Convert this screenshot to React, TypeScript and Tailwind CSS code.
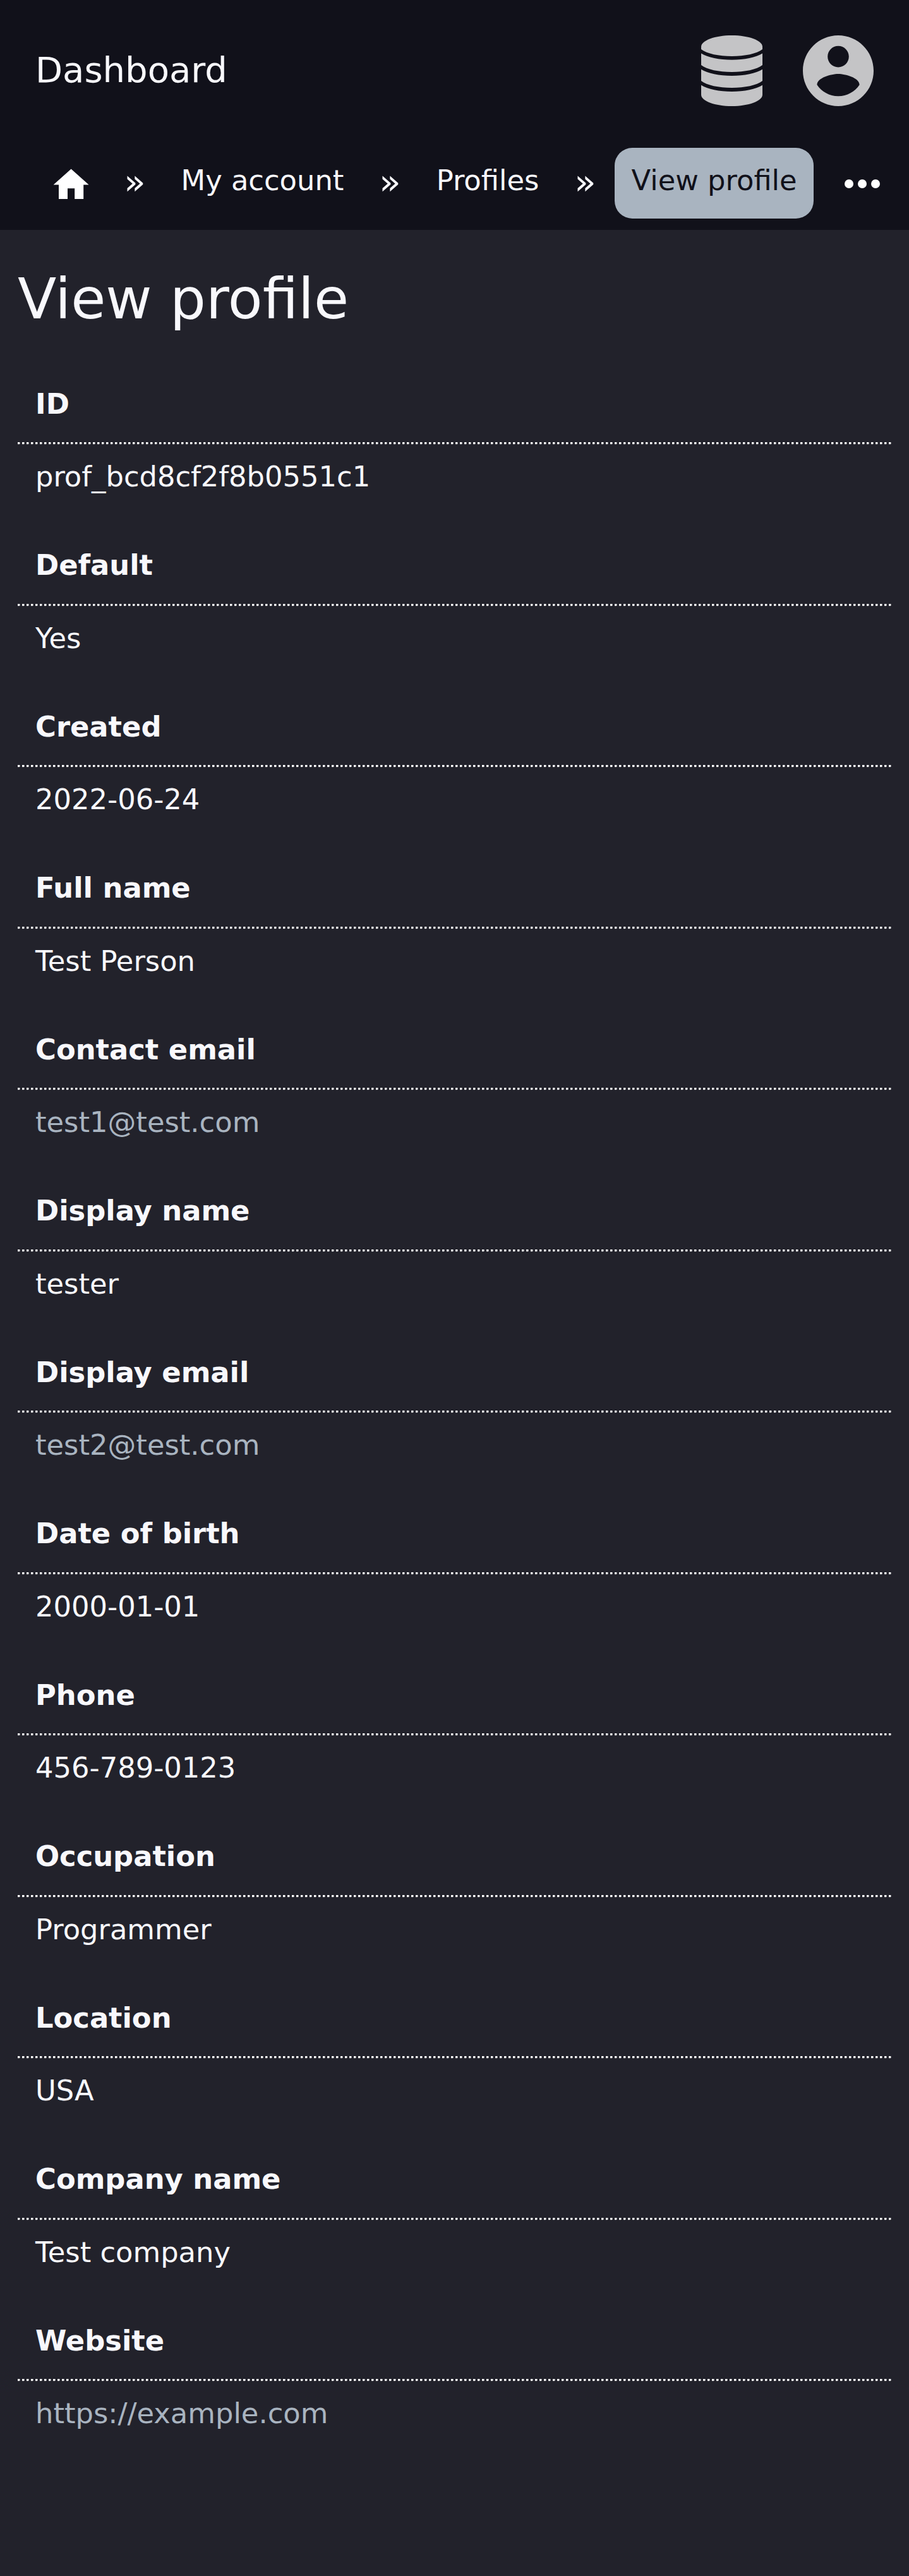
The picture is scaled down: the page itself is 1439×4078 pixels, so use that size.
const fields: { label: string; value: string; link?: boolean }[] = [
  { label: "ID", value: "prof_bcd8cf2f8b0551c1" },
  { label: "Default", value: "Yes" },
  { label: "Created", value: "2022-06-24" },
  { label: "Full name", value: "Test Person" },
  { label: "Contact email", value: "test1@test.com", link: true },
  { label: "Display name", value: "tester" },
  { label: "Display email", value: "test2@test.com", link: true },
  { label: "Date of birth", value: "2000-01-01" },
  { label: "Phone", value: "456-789-0123" },
  { label: "Occupation", value: "Programmer" },
  { label: "Location", value: "USA" },
  { label: "Company name", value: "Test company" },
  { label: "Website", value: "https://example.com", link: true },
];

function DatabaseIcon() {
  return (
    <svg viewBox="0 0 97 112" className="h-28 w-[97px]" fill="currentColor">
      <path d="M0 18C0 8 22 0 48.500 0S97 8 97 18V22C88 29 69 33 48.500 33S9 29 0 22Z" />
      <path d="M0 28.500C10 35 29 38.800 48.500 38.800S87 35 97 28.500V47C88 54 69 58 48.500 58S9 54 0 47Z" />
      <path d="M0 53.700C10 60.200 29 64 48.500 64S87 60.200 97 53.700V72C88 79 69 83 48.500 83S9 79 0 72Z" />
      <path d="M0 78.800C10 85.300 29 89 48.500 89S87 85.300 97 78.800V94C97 104 75 112 48.500 112S0 104 0 94Z" />
    </svg>
  );
}

function AccountIcon() {
  return (
    <svg viewBox="2 2 20 20" className="size-28" fill="currentColor">
      <path d="M12 2C6.480 2 2 6.480 2 12s4.480 10 10 10 10-4.480 10-10S17.520 2 12 2zm0 3c1.660 0 3 1.340 3 3s-1.340 3-3 3-3-1.340-3-3 1.340-3 3-3zm0 14.200c-2.500 0-4.710-1.280-6-3.220.030-1.990 4-3.080 6-3.080 1.990 0 5.970 1.090 6 3.080-1.290 1.940-3.500 3.220-6 3.220z" />
    </svg>
  );
}

function Separator() {
  return <span className="w-[34.300px] pt-5 text-[56px]">»</span>;
}

export default function App() {
  return (
    <div className="min-h-[4078px] w-full bg-[#22222b] font-['DejaVu_Sans',sans-serif] text-[44.8px] leading-[67.2px] text-[#f8f8fc]">
      <header className="h-[364px] bg-[#11111a]">
        <div className="flex h-[224px] items-center justify-between px-14">
          <span className="pb-[2px] text-[56px]">Dashboard</span>
          <div className="flex items-center gap-16 text-[#c4c4c6]">
            <DatabaseIcon />
            <AccountIcon />
          </div>
        </div>
        <nav className="flex h-[140px] items-start pt-[10px] whitespace-nowrap">
          <a className="mr-[50.500px] ml-[78.500px] pt-[24.500px] text-white">
            <svg viewBox="0 0 24 24" className="size-[67.200px]" fill="currentColor">
              <path d="M10 20v-6h4v6h5v-8h3L12 3 2 12h3v8z" />
            </svg>
          </a>
          <Separator />
          <a className="px-14 pt-[18px]">My account</a>
          <Separator />
          <a className="px-14 pt-[18px]">Profiles</a>
          <Separator />
          <a className="ml-[29.500px] h-28 w-[315px] rounded-[28px] bg-[#a9b4c0] pt-[18px] text-center text-[#11111a]">
            View profile
          </a>
          <svg viewBox="4 10 16 4" className="mt-[49.500px] ml-[49px] h-[14px] w-[56px] text-white" fill="currentColor">
            <circle cx="6" cy="12" r="2" />
            <circle cx="12" cy="12" r="2" />
            <circle cx="18" cy="12" r="2" />
          </svg>
        </nav>
      </header>
      <main className="px-7 pt-[42px]">
        <h1 className="text-[89.600px] leading-[134px]">View profile</h1>
        <dl className="pt-[33px]">
          {fields.map((f) => (
            <div key={f.label} className="h-[255.500px]">
              <dt className="h-[127px] px-7 pt-[32.800px] font-bold">{f.label}</dt>
              <div className="h-[3px] bg-[repeating-linear-gradient(90deg,#ffffff_0_3px,#85858a_3px_4px,transparent_4px_7px)]" />
              <div className="h-px bg-[repeating-linear-gradient(90deg,#ffffff_0_3px,transparent_3px_7px)] opacity-20" />
              <dd className={f.link ? "px-7 pt-[17px] text-[#a9b4c0]" : "px-7 pt-[17px]"}>{f.value}</dd>
            </div>
          ))}
        </dl>
      </main>
    </div>
  );
}
